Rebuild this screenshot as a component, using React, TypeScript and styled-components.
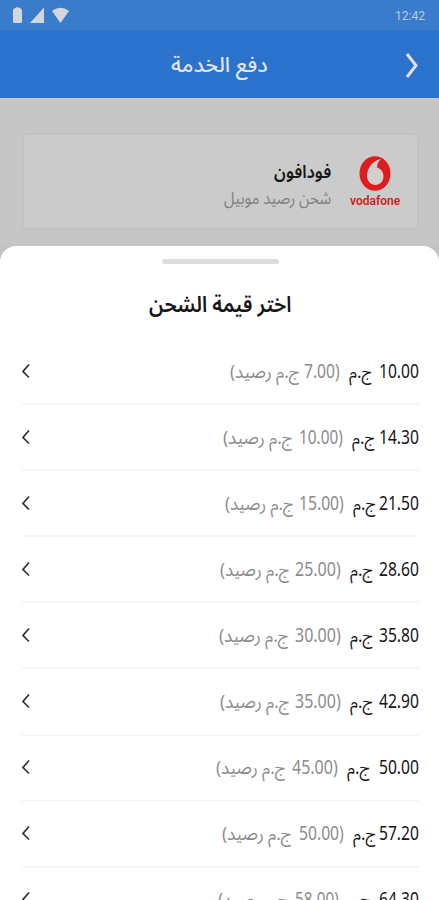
import React, { useLayoutEffect, useRef, useState } from "react";
import styled, { createGlobalStyle } from "styled-components";

const GlobalStyle = createGlobalStyle`
  * { box-sizing: border-box; }
  html, body { margin: 0; height: 100%; overflow: hidden; }
  body { background: #c8c8c8; font-family: "Noto Sans", "Noto Sans Arabic", "DejaVu Sans", sans-serif; }
`;

const Screen = styled.div`
  width: 439px;
  height: 900px;
  overflow: hidden;
  display: flex;
  flex-direction: column;
  background: #c8c8c8;
`;

const StatusBar = styled.header`
  height: 30px;
  flex: none;
  display: flex;
  align-items: center;
  justify-content: space-between;
  padding: 2px 14px 0 12px;
  background: #3a7ccc;
`;

const StatusIcons = styled.svg`
  width: 58px;
  height: 18px;
  margin-top: -2px;
  fill: #d3d6da;
`;

const TitleBar = styled.div`
  height: 68px;
  flex: none;
  display: grid;
  grid-template-columns: 50px 1fr 50px;
  align-items: center;
  justify-items: center;
  direction: ltr;
  background: #2a72cc;
  box-shadow: 0 1px 1px #b3bdcb;
`;

const BackIcon = styled.svg`
  grid-column: 3;
  width: 16px;
  height: 28px;
  fill: none;
  stroke: #dfe1e3;
  stroke-width: 3;
  margin: 2px 4px 0 0;
`;

const ServiceArea = styled.section`
  height: 148px;
  flex: none;
  padding: 37px 22px 0 24px;
  background: #c6c6c6;
`;

const ServiceCard = styled.article`
  height: 93px;
  display: flex;
  direction: rtl;
  padding-right: 17px;
  gap: 19px;
  border-radius: 4px;
  background: #cbcbcb;
  box-shadow: 0 0 4px rgba(0, 0, 0, 0.07);
`;

const Brand = styled.div`
  width: 50px;
  padding-top: 21px;
  display: flex;
  flex-direction: column;
  align-items: center;
`;

const BrandMark = styled.svg`
  width: 32px;
  height: 35px;
  margin-bottom: 1px;
  flex: none;
`;

const ServiceText = styled.div`
  display: flex;
  flex-direction: column;
  padding-top: 22px;
`;

const SheetWrap = styled.div`
  flex: 1;
  min-height: 0;
  display: flex;
  flex-direction: column;
  background: #c3c3c3;
`;

const Sheet = styled.main`
  flex: 1;
  min-height: 0;
  overflow: hidden;
  display: flex;
  flex-direction: column;
  align-items: center;
  background: #fff;
  border-radius: 16px 16px 0 0;
`;

const Handle = styled.div`
  width: 117px;
  height: 5px;
  flex: none;
  margin: 13px 0 22px 2px;
  border-radius: 3px;
  background: #dddddd;
`;

const AmountList = styled.ul`
  list-style: none;
  width: 439px;
  flex: none;
  margin: 19px 0 0;
  padding: 0 20px 0 22px;
`;

const AmountRow = styled.li`
  height: 66.1px;
  display: flex;
  direction: rtl;
  align-items: center;
  padding-bottom: 1px;
  border-bottom: 2px solid #f6f6f6;
`;

const RowArrow = styled.svg`
  width: 8px;
  height: 16px;
  margin-right: auto;
  fill: none;
  stroke: #333;
  stroke-width: 1.7;
`;

const Label = styled.div<{ $size: number; $line: number; $color: string; $weight?: number; $width: number; $gap?: number; $font?: string }>`
  flex: none;
  width: ${(p) => p.$width}px;
  height: ${(p) => p.$line}px;
  line-height: ${(p) => p.$line}px;
  margin-right: ${(p) => p.$gap ?? 0}px;
  font-size: ${(p) => p.$size}px;
  font-weight: ${(p) => p.$weight ?? 400};
  color: ${(p) => p.$color};
  ${(p) => (p.$font ? `font-family: ${p.$font};` : "")}
  white-space: nowrap;
  direction: ltr;
`;

const LabelInner = styled.span`
  display: inline-block;
  transform-origin: 0 50%;
`;

type FitProps = React.ComponentProps<typeof Label> & { dir?: "rtl" | "ltr" };

/** Condenses or widens a line of text so that it fills its column exactly. */
function FitText({ children, dir = "rtl", ...rest }: FitProps) {
  const ref = useRef<HTMLSpanElement>(null);
  const [scale, setScale] = useState(1);
  useLayoutEffect(() => {
    if (ref.current) setScale(rest.$width / ref.current.offsetWidth);
  }, [rest.$width]);
  return (
    <Label {...rest}>
      <LabelInner ref={ref} dir={dir} style={{ transform: `scaleX(${scale})` }}>
        {children}
      </LabelInner>
    </Label>
  );
}

type Amount = {
  price: string;
  credit: string;
  currencyGap: number;
  creditWidth: number;
  unitGap: number;
  unitWidth: number;
};

const amounts: Amount[] = [
  { price: "10.00", credit: "7.00", currencyGap: 7, creditWidth: 36, unitGap: 4, unitWidth: 70 },
  { price: "14.30", credit: "10.00", currencyGap: 4, creditWidth: 44, unitGap: 6, unitWidth: 70 },
  { price: "21.50", credit: "15.00", currencyGap: 3, creditWidth: 45, unitGap: 5, unitWidth: 69 },
  { price: "28.60", credit: "25.00", currencyGap: 6, creditWidth: 46, unitGap: 5, unitWidth: 70 },
  { price: "35.80", credit: "30.00", currencyGap: 6, creditWidth: 46, unitGap: 6, unitWidth: 70 },
  { price: "42.90", credit: "35.00", currencyGap: 6, creditWidth: 46, unitGap: 5, unitWidth: 70 },
  { price: "50.00", credit: "45.00", currencyGap: 9, creditWidth: 46, unitGap: 6, unitWidth: 70 },
  { price: "57.20", credit: "50.00", currencyGap: 3, creditWidth: 45, unitGap: 7, unitWidth: 70 },
  { price: "64.30", credit: "58.00", currencyGap: 8, creditWidth: 44, unitGap: 6, unitWidth: 71 },
];

export default function App() {
  return (
    <Screen>
      <GlobalStyle />
      <StatusBar>
        <StatusIcons viewBox="0 0 58 18">
          <path d="M3 2Q5.500.5 8 2Q10 2.500 10 4.500V15.500Q10 17 8.500 17H2.500Q1 17 1 15.500V4.500Q1 2.500 3 2z" />
          <path d="M32 1.500v15.500H18z" />
          <path d="M40 5Q48.500-1.500 57 5L48.500 17z" />
        </StatusIcons>
        <FitText $size={12.5} $line={18} $color="#b8cbe2" $width={30} dir="ltr" $font="Roboto">12:42</FitText>
      </StatusBar>
      <TitleBar>
        <span />
        <FitText $size={21} $line={34} $color="#e0e3e7" $weight={500} $width={97}>دفع الخدمة</FitText>
        <BackIcon viewBox="0 0 16 28"><path d="M3 3l9 11.500L3 26" /></BackIcon>
      </TitleBar>
      <ServiceArea>
        <ServiceCard>
          <Brand>
            <BrandMark viewBox="0 0 32 35">
              <ellipse cx="16" cy="17.500" rx="15.500" ry="17.300" fill="#dc1c1e" />
              <path d="M22 3C15 4 8 11 8 20c0 5 4 9 8.500 9s8-4 8-8.500c0-5-3-8-6.500-9C18 8 19.500 5 22 3z" fill="#d5cfcc" />
            </BrandMark>
            <FitText $size={12.5} $line={18} $color="#d41d20" $weight={600} $width={50} dir="ltr" $font="Roboto">vodafone</FitText>
          </Brand>
          <ServiceText>
            <FitText $size={18} $line={28} $color="#161616" $weight={600} $width={57}>فودافون</FitText>
            <FitText $size={17} $line={25} $color="#808080" $width={107}>شحن رصيد موبيل</FitText>
          </ServiceText>
        </ServiceCard>
      </ServiceArea>
      <SheetWrap>
        <Sheet>
          <Handle />
          <FitText $size={22} $line={34} $color="#151515" $weight={600} $width={142}>اختر قيمة الشحن</FitText>
          <AmountList>
            {amounts.map((a) => (
              <AmountRow key={a.price}>
                <FitText $size={19.5} $line={28} $color="#151515" $width={40} dir="ltr">{a.price}</FitText>
                <FitText $size={18} $line={28} $color="#151515" $width={23} $gap={a.currencyGap}>ج.م</FitText>
                <FitText $size={19.5} $line={28} $color="#8c8c8c" $width={a.creditWidth} $gap={9}>({a.credit}</FitText>
                <FitText $size={18} $line={28} $color="#8c8c8c" $width={a.unitWidth} $gap={a.unitGap}>ج.م رصيد)</FitText>
                <RowArrow viewBox="0 0 8 16"><path d="M7 1.500L1 8.500l6 6" /></RowArrow>
              </AmountRow>
            ))}
          </AmountList>
        </Sheet>
      </SheetWrap>
    </Screen>
  );
}
